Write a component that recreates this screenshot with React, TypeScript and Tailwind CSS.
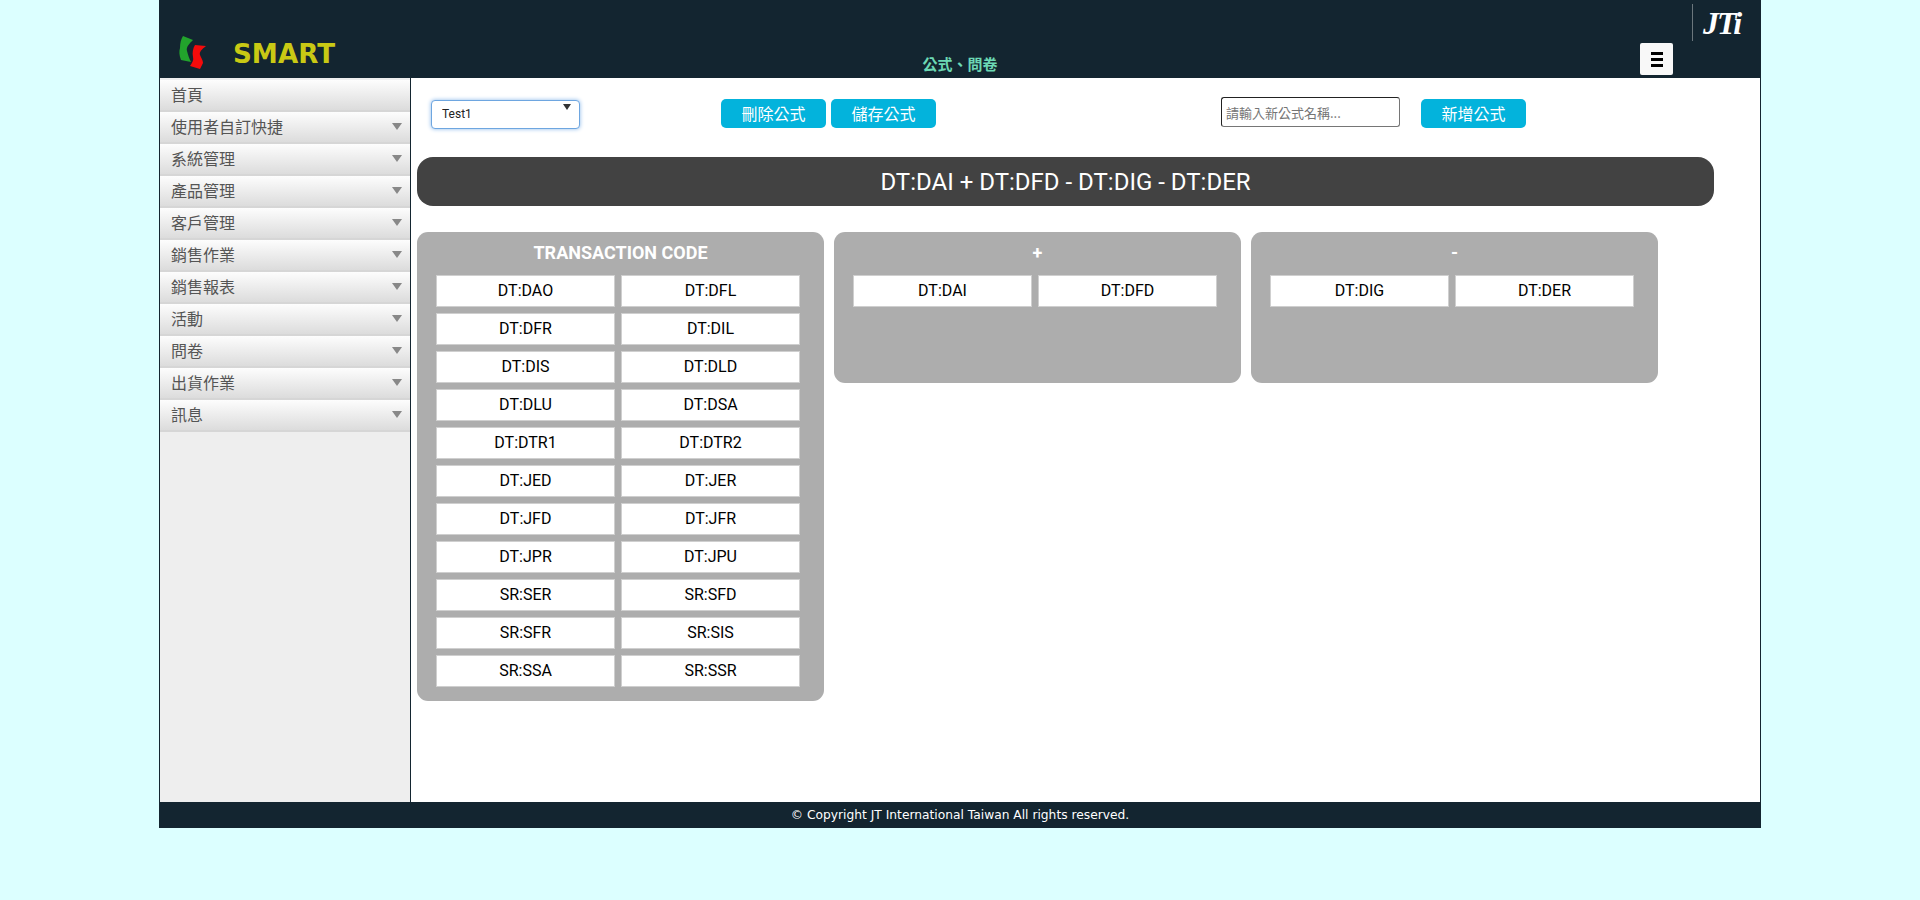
import React from 'react'

const menuItems = [
    { name: '首頁', arrow: false },
    { name: '使用者自訂快捷', arrow: true },
    { name: '系統管理', arrow: true },
    { name: '產品管理', arrow: true },
    { name: '客戶管理', arrow: true },
    { name: '銷售作業', arrow: true },
    { name: '銷售報表', arrow: true },
    { name: '活動', arrow: true },
    { name: '問卷', arrow: true },
    { name: '出貨作業', arrow: true },
    { name: '訊息', arrow: true },
]

const transactionCodes = [
    'DT:DAO', 'DT:DFL', 'DT:DFR', 'DT:DIL', 'DT:DIS', 'DT:DLD', 'DT:DLU', 'DT:DSA',
    'DT:DTR1', 'DT:DTR2', 'DT:JED', 'DT:JER', 'DT:JFD', 'DT:JFR', 'DT:JPR', 'DT:JPU',
    'SR:SER', 'SR:SFD', 'SR:SFR', 'SR:SIS', 'SR:SSA', 'SR:SSR',
]

function CodePanel({ title, codes, className }: { title: string; codes: string[]; className: string }) {
    return (
        <div className={`w-[407px] bg-[#adadad] rounded-[11px] px-[19px] ${className}`}>
            <div className="h-[40px] mb-[3px] flex items-center justify-center text-white font-bold text-[18px] font-['Roboto',sans-serif]">
                {title}
            </div>
            <div className="grid grid-cols-[179px_179px] gap-x-[6px] gap-y-[6px]">
                {codes.map((code) => (
                    <div
                        key={code}
                        className="h-[32px] bg-white border border-[#cfcfcf] flex items-center justify-center text-[16px] text-black font-['Roboto',sans-serif]"
                    >
                        {code}
                    </div>
                ))}
            </div>
        </div>
    )
}

function ActionButton({ label, className }: { label: string; className?: string }) {
    return (
        <button className={`w-[105px] h-[29px] pb-[2px] bg-[#03b3dc] rounded-[5px] text-white text-[16px] ${className ?? ''}`}>
            {label}
        </button>
    )
}

function App() {
    return (
        <div className="min-h-screen bg-[#dcffff] font-['Noto_Sans_CJK_TC','Liberation_Sans',sans-serif]">
            <div className="w-[1602px] mx-auto">
                <header className="h-[78px] bg-[#132530] flex items-end relative">
                    <div className="w-[252px] h-full flex items-end pl-[19px] pb-[7px]">
                        <svg width="164" height="38" viewBox="0 0 164 38">
                            <path d="M5 3 L15 7 C11 11 8 14 9 18 C10 22 11 25 13 29 L3 27 C1 22 1 18 2 15 C2 10 3 6 5 3 Z" fill="#22a32c" />
                            <path d="M17 12 L28 13 C24 16 21 19 22 22 C23 25 25 27 25 30 L22 36 L12 33 C14 30 16 27 15 24 C14 20 15 15 17 12 Z" fill="#f40b0b" />
                            <text
                                x="55"
                                y="30"
                                textLength="102"
                                lengthAdjust="spacingAndGlyphs"
                                fontFamily="'DejaVu Sans', sans-serif"
                                fontWeight="700"
                                fontSize="26"
                                fill="#c9c914"
                            >
                                SMART
                            </text>
                        </svg>
                    </div>
                    <div className="w-[1098px] h-[24px] mb-[2px] flex items-center justify-center text-[15px] font-bold text-[#6cd8b4]">
                        公式、問卷
                    </div>
                    <button className="mb-[3px] ml-[131px] w-[33px] h-[32px] bg-[#f8f8f8] rounded-[2px] flex flex-col items-center justify-center gap-[3px]">
                        <span className="w-[12px] h-[3px] bg-black" />
                        <span className="w-[12px] h-[3px] bg-black" />
                        <span className="w-[12px] h-[3px] bg-black" />
                    </button>
                    <div className="absolute left-[1533px] top-[4px] h-[37px] border-l border-[#6b767c] pl-[10px] flex items-center">
                        <span className="text-white font-bold italic text-[32px] tracking-[-2px] leading-none font-['Liberation_Serif',serif]">
                            JTi
                        </span>
                    </div>
                </header>

                <div className="h-[724px] flex border-x border-[#132530]">
                    <aside className="w-[251px] pt-[2px] bg-[#eeeeee] border-r border-[#132530] shrink-0">
                        {menuItems.map((item) => (
                            <div
                                key={item.name}
                                className="h-[32px] px-[11px] pb-[2px] flex items-center justify-between border-b-2 border-[#d6d6d6] bg-gradient-to-b from-[#fdfdfd] to-[#dcdcdc] text-[16px] text-[#555555]"
                            >
                                <span>{item.name}</span>
                                {item.arrow && (
                                    <span className="w-0 h-0 mr-[-3px] border-x-[5px] border-x-transparent border-t-[7px] border-t-[#888888]" />
                                )}
                            </div>
                        ))}
                    </aside>

                    <main className="flex-1 bg-white pl-[6px]">
                        <div className="h-[79px] flex items-start pt-[21px]">
                            <div className="relative ml-[14px] w-[149px] h-[29px]">
                                <select className="w-full h-full appearance-none bg-white rounded-[4px] border border-[#6ea6e0] shadow-[0_0_4px_#8ab8ea] pl-[10px] text-[12px] text-[#222222] font-['Roboto',sans-serif]">
                                    <option>Test1</option>
                                </select>
                                <span className="absolute right-[9px] top-[5px] w-0 h-0 border-x-[4px] border-x-transparent border-t-[6px] border-t-[#333333]" />
                            </div>
                            <ActionButton label="刪除公式" className="ml-[141px]" />
                            <ActionButton label="儲存公式" className="ml-[5px]" />
                            <input
                                placeholder="請輸入新公式名稱..."
                                className="ml-[285px] mt-[-2px] w-[179px] h-[30px] rounded-[3px] border border-[#767676] border-t-[#222222] border-l-[#222222] pl-[4px] text-[13px] placeholder:text-[#757575]"
                            />
                            <ActionButton label="新增公式" className="ml-[21px]" />
                        </div>

                        <div className="w-[1297px] h-[49px] bg-[#424242] rounded-[16px] flex items-center justify-center text-white text-[24px] font-['Roboto',sans-serif]">
                            DT:DAI + DT:DFD - DT:DIG - DT:DER
                        </div>

                        <div className="flex items-start gap-[10px] mt-[26px]">
                            <CodePanel title="TRANSACTION CODE" codes={transactionCodes} className="h-[469px]" />
                            <CodePanel title="+" codes={['DT:DAI', 'DT:DFD']} className="h-[151px]" />
                            <CodePanel title="-" codes={['DT:DIG', 'DT:DER']} className="h-[151px]" />
                        </div>
                    </main>
                </div>

                <footer className="h-[26px] bg-[#132530] flex items-center justify-center text-white text-[12.25px] font-['DejaVu_Sans',sans-serif]">
                    © Copyright JT International Taiwan All rights reserved.
                </footer>
            </div>
        </div>
    )
}

export default App
